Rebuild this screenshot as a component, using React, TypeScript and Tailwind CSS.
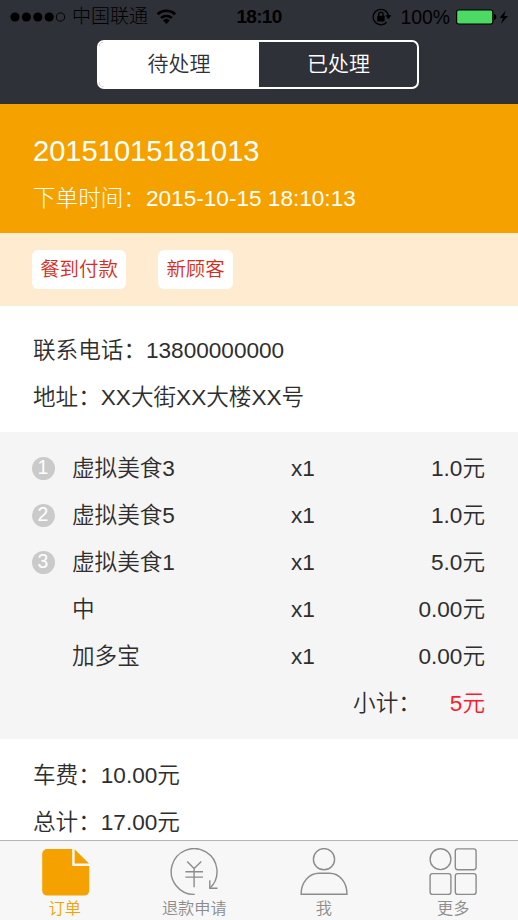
import type { ReactNode } from "react";

const items = [
  { no: 1, name: "虚拟美食3", count: "x1", price: "1.0元" },
  { no: 2, name: "虚拟美食5", count: "x1", price: "1.0元" },
  { no: 3, name: "虚拟美食1", count: "x1", price: "5.0元" },
  { no: null, name: "中", count: "x1", price: "0.00元" },
  { no: null, name: "加多宝", count: "x1", price: "0.00元" },
];

function StatusBar() {
  return (
    <div className="grid h-8 grid-cols-[1fr_auto_1fr] items-center pt-[1px] text-[19.4px] leading-8 text-black">
      <div className="flex items-center pl-[10px]">
        <svg width="56" height="12" viewBox="0 0 56 12">
          <circle cx="5" cy="6" r="4.6" />
          <circle cx="16.4" cy="6" r="4.6" />
          <circle cx="27.8" cy="6" r="4.6" />
          <circle cx="39.2" cy="6" r="4.6" />
          <circle cx="50.5" cy="6" r="4.1" fill="none" stroke="#000" strokeWidth="0.9" />
        </svg>
        <span className="ml-[6px] text-[19px] font-light">中国联通</span>
        <svg className="ml-[8px]" width="21" height="16" viewBox="0 0 21 16">
          <path d="M1.6 5.2A13 13 0 0 1 19.2 5.2" fill="none" stroke="#000" strokeWidth="2.6" />
          <path d="M5 9A8 8 0 0 1 15.8 9" fill="none" stroke="#000" strokeWidth="2.5" />
          <path d="M7 11.4A5 5 0 0 1 13.8 11.4L10.4 15Z" />
        </svg>
      </div>
      <span className="text-[19px] font-bold tracking-[-0.7px]">18:10</span>
      <div className="flex items-center justify-end pr-[9px]">
        <svg width="20" height="18" viewBox="0 0 20 18">
          <path d="M14.6 14.2A7.7 7.7 0 1 1 16.5 8" fill="none" stroke="#000" strokeWidth="1.3" />
          <path d="M13.4 7.2h6l-3 4z" />
          <rect x="5.2" y="7.7" width="7.4" height="5.7" rx="0.6" />
          <path d="M6.7 8V6.4a2.2 2.2 0 0 1 4.4 0V8" fill="none" stroke="#000" strokeWidth="1.3" />
        </svg>
        <span className="ml-[8px]">100%</span>
        <svg className="ml-[6px]" width="53" height="16" viewBox="0 0 53 16">
          <rect x="0.6" y="1" width="36.2" height="14" rx="2" fill="#4cd964" stroke="#000" strokeWidth="1.2" />
          <path d="M38 5q2.4 0.6 2.4 3T38 11z" />
          <path d="M49.6 1.5L43.6 9h3.4l-2 5.8L52 7h-3.8z" />
        </svg>
      </div>
    </div>
  );
}

function Tab({ label, active, children }: { label: string; active?: boolean; children: ReactNode }) {
  return (
    <div className={`flex flex-1 flex-col items-center ${active ? "text-[#f5a100]" : "text-[#8c8c8c]"}`}>
      <svg
        className="mt-[7px] shrink-0"
        width="50"
        height="50"
        viewBox="0 0 50 50"
        fill="none"
        stroke="currentColor"
        strokeWidth="1.4"
      >
        {children}
      </svg>
      <span className="text-[16.2px] leading-5">{label}</span>
    </div>
  );
}

function Row({ label, value }: { label: string; value: string }) {
  return (
    <p className="h-[47px] leading-[47px]">
      {label}：{value}
    </p>
  );
}

export default function App() {
  return (
    <div className="flex h-[920px] w-[518px] flex-col overflow-hidden bg-white font-['Liberation_Sans','Noto_Sans_CJK_SC',sans-serif] text-[22.6px] font-[350] text-[#2e2e2e]">
      <header className="h-[104px] shrink-0 bg-[#2f3138]">
        <StatusBar />
        <div className="ml-[97px] mt-2 flex h-[49px] w-[322px] overflow-hidden rounded-[7px] border-2 border-white text-center text-[21px] leading-[43px]">
          <span className="w-[160px] bg-white text-[#2f3138]">待处理</span>
          <span className="flex-1 pl-px text-white">已处理</span>
        </div>
      </header>

      <section className="h-[129px] shrink-0 bg-[#f5a100] px-[33px] pt-6 text-white">
        <h1 className="text-[29.1px] leading-[47px]">20151015181013</h1>
        <p className="font-light leading-[47px]">下单时间：2015-10-15 18:10:13</p>
      </section>

      <section className="flex h-[73px] shrink-0 items-start gap-8 bg-[#feebd0] px-8 pt-[17px] text-[19.4px] leading-[38px] text-[#d62c1a]">
        <span className="h-[39px] w-[94px] rounded-md bg-white text-center">餐到付款</span>
        <span className="h-[39px] w-[75px] rounded-md bg-white text-center">新顾客</span>
      </section>

      <section className="h-[126px] shrink-0 px-[33px] pt-[21px]">
        <Row label="联系电话" value="13800000000" />
        <Row label="地址" value="XX大街XX大楼XX号" />
      </section>

      <section className="h-[307px] shrink-0 bg-[#f5f5f5] pl-8 pr-[33px] pt-[13px]">
        {items.map((item) => (
          <div key={item.name} className="grid h-[47px] grid-cols-[40px_219px_1fr_auto] items-center">
            {item.no ? (
              <span className="h-[23px] w-[23px] rounded-full bg-[#cacaca] pr-px text-center text-[19.4px] leading-[21px] text-white">
                {item.no}
              </span>
            ) : (
              <span />
            )}
            <span>{item.name}</span>
            <span>{item.count}</span>
            <span>{item.price}</span>
          </div>
        ))}
        <div className="flex h-[47px] items-center justify-end">
          <span>小计：</span>
          <span className="ml-[29px] text-[#fb1a2e]">5元</span>
        </div>
      </section>

      <section className="min-h-0 flex-1 px-[33px] pt-[13px]">
        <Row label="车费" value="10.00元" />
        <Row label="总计" value="17.00元" />
      </section>

      <nav className="flex h-20 shrink-0 border-t border-[#b5b5b5] bg-[#f7f7f7]">
        <Tab label="订单" active>
          <path
            d="M7 1H32.2V18H49.2V42.6a5 5 0 0 1-5 5H7.2a5 5 0 0 1-5-5V6a5 5 0 0 1 5-5z"
            fill="currentColor"
            stroke="none"
          />
          <path d="M34.6 1.2L49 15.6H34.6z" fill="currentColor" stroke="none" />
        </Tab>
        <Tab label="退款申请">
          <path d="M25.7 46.4A22.9 22.9 0 1 1 40.8 40.2" />
          <path d="M40.8 32.3v8h7.7" />
          <path d="M18.2 13.5l6.9 6.9 7.2-6.9M16.4 23.7h17.6M16.4 29.1h17.6M25.1 20.4v18.8" />
        </Tab>
        <Tab label="我">
          <circle cx="25" cy="11.2" r="10.6" />
          <path d="M2.1 46.2C2.1 34 10 25.3 20 25.3H30.5C40.5 25.3 48 34 48 46.2z" />
        </Tab>
        <Tab label="更多">
          <circle cx="12.5" cy="11.2" r="10.4" />
          <rect x="27.3" y="0.9" width="20.8" height="20.8" rx="2.4" />
          <rect x="2.1" y="25.6" width="20.8" height="20.8" rx="2.4" />
          <rect x="27.3" y="25.6" width="20.8" height="20.8" rx="2.4" />
        </Tab>
      </nav>
    </div>
  );
}
